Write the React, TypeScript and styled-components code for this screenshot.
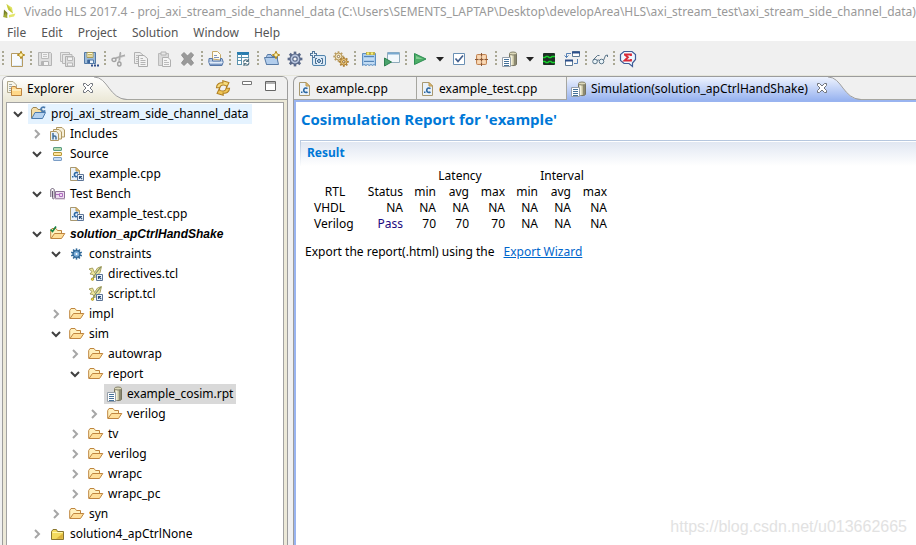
import React from "react";
import styled, { createGlobalStyle, css } from "styled-components";

const UI_FONT = '"Noto Sans", "Open Sans", sans-serif';

const GlobalStyle = createGlobalStyle`
  *, *::before, *::after { box-sizing: border-box; }
  body { margin: 0; background: #f0f0f0; }
  button { font: inherit; color: inherit; border: 0; background: none; padding: 0; }
`;

/* ---------- layout ---------- */

const Window = styled.div`
  position: relative;
  display: flex;
  flex-direction: column;
  height: 100vh;
  overflow: hidden;
  background: #f0f0f0;
  color: #000;
  font: 12px/20px ${UI_FONT};
`;

const TitleBar = styled.header`
  display: flex;
  align-items: center;
  gap: 6px;
  height: 24px;
  flex: none;
  padding: 0 0 1px 2px;
  background: #fff;
  color: #999;
  white-space: nowrap;
  overflow: hidden;
`;

const MenuBar = styled.nav`
  display: flex;
  align-items: center;
  gap: 15px;
  height: 17px;
  flex: none;
  padding-left: 7px;
  background: #fff;
  color: #555;
`;

const ToolBar = styled.div`
  display: flex;
  align-items: center;
  height: 35px;
  flex: none;
  padding: 2px 0 0 2px;
  border-bottom: 1px solid #e6e6dc;
`;

const ToolGroup = styled.div`
  display: flex;
  align-items: center;
  gap: 7px;
  padding: 0 5px;

  &::before {
    content: "";
    width: 2px;
    height: 16px;
    margin: 0 -2px 0 -5px;
    background: repeating-linear-gradient(#aaa894 0 2px, transparent 2px 4px);
  }
`;

const ToolButton = styled.button<{ $narrow?: boolean }>`
  display: flex;
  align-items: center;
  justify-content: center;
  width: ${(p) => (p.$narrow ? 9 : 16)}px;
  height: 16px;
`;

const Workbench = styled.main`
  display: flex;
  flex: 1;
  gap: 5px;
  min-height: 0;
  padding-left: 2px;
`;

const Explorer = styled.section`
  display: flex;
  flex-direction: column;
  width: 286px;
  flex: none;
  border: 1px solid #9c9c9c;
  border-bottom: 0;
  border-radius: 6px 6px 0 0;
  background: #ece9d8;
`;

const ExplorerHead = styled.div`
  display: flex;
  align-items: stretch;
  height: 23px;
  flex: none;
  border-bottom: 1px solid #a6a6a0;
  border-radius: 5px 5px 0 0;
  background: #f0f0f0;
`;

const ViewTab = styled.div`
  display: flex;
  align-items: center;
  gap: 4px;
  margin-bottom: -1px;
  padding-left: 4px;
  border-radius: 5px 0 0 0;
  background: linear-gradient(#fff, #ece9d8);
`;

const Curve = styled.svg`
  display: block;
  width: 34px;
  height: 23px;
  flex: none;
`;

const HeadTools = styled.div`
  display: flex;
  gap: 8px;
  margin-left: auto;
  padding: 3px 8px 0 0;
`;

const Tree = styled.ul`
  flex: 1;
  min-height: 0;
  margin: 2px 3px 0;
  padding: 1px 0 0;
  border: 1px solid #a2a2a2;
  border-bottom: 0;
  background: #fff;
  list-style: none;
  overflow: hidden;
`;

const TreeRow = styled.li<{ $level: number }>`
  display: flex;
  height: 20px;
  padding-left: ${(p) => 6 + p.$level * 19}px;
  white-space: nowrap;
`;

const Twisty = styled.button`
  display: flex;
  align-items: center;
  width: 15px;
  height: 20px;
`;

const NodeLabel = styled.span<{ $tone?: "hot" | "selected"; $active?: boolean }>`
  display: flex;
  align-items: center;
  gap: 4px;
  padding: 0 3px;
  ${(p) => p.$tone === "hot" && css`background: #e5f3ff;`}
  ${(p) => p.$tone === "selected" && css`background: #d9d9d9;`}
  ${(p) => p.$active && css`font: italic bold 12px/18px "Liberation Sans", Arial, sans-serif;`}
`;

const Editor = styled.section`
  display: flex;
  flex-direction: column;
  flex: 1;
  min-width: 0;
  border: 1px solid #9c9c9c;
  border-width: 1px 0 0 1px;
  border-radius: 6px 0 0 0;
`;

const EditorTabs = styled.div`
  display: flex;
  height: 25px;
  flex: none;
  border-bottom: 2px solid #99b4f0;
  box-shadow: inset 0 -1px #a6a6a0;
  overflow: hidden;
  white-space: nowrap;
`;

const EditorTab = styled.button<{ $width: number }>`
  display: flex;
  align-items: center;
  gap: 3px;
  width: ${(p) => p.$width}px;
  flex: none;
  padding-left: 3px;
  border-right: 1px solid #a6a6a0;
`;

const ActiveTab = styled.button`
  display: flex;
  align-items: center;
  gap: 4px;
  flex: none;
  padding-left: 4px;
  border-radius: 6px 0 0 0;
  background: linear-gradient(#eef3fe, #99b4f0);
`;

const CloseMark = styled.svg`
  width: 12px;
  height: 12px;
  margin: 0 0 1px 4px;
  flex: none;
`;

const Page = styled.div`
  flex: 1;
  padding: 7px 0 0 4px;
  border-left: 2px solid #99b4f0;
  background: #fff;
`;

const ReportTitle = styled.h1`
  margin: 0 0 10px 1px;
  color: #0078d7;
  font-family: "Open Sans", "Noto Sans", sans-serif;
  font-size: 15px;
  line-height: 21px;
`;

const SectionTitle = styled.h2`
  height: 26px;
  margin: 0;
  padding-left: 6px;
  border: 1px solid #b5c6de;
  border-width: 1px 0 0 1px;
  border-image: linear-gradient(#b5c6de, #fff) 1;
  background: linear-gradient(#fff 0 1px, #e1e7f2 1px, #fff);
  color: #0078d7;
  font-size: 12px;
  line-height: 23px;
`;

const ReportTable = styled.table`
  margin: 2px 0 0 14px;
  border-collapse: collapse;
  table-layout: fixed;
  width: 293px;
  line-height: 16px;

  th, td { padding: 0; font-weight: normal; text-align: right; white-space: nowrap; }
  th[scope="row"] { text-align: left; }
  th[scope="colgroup"], th.rtl { text-align: center; }
  th[scope="colgroup"] { padding-left: 12px; }
`;

const Col = styled.col<{ $width: number }>`
  width: ${(p) => p.$width}px;
`;

const Pass = styled.td`
  color: #1c0a80;
`;

const ExportLine = styled.p`
  margin: 10px 0 0 5px;

  a { margin-left: 6px; color: #0066cc; }
`;

const Watermark = styled.div`
  position: absolute;
  right: 9px;
  bottom: 8px;
  color: #e2e2e2;
  font: 16px/20px "Liberation Sans", Arial, sans-serif;
`;

/* ---------- icons ---------- */

const IconSvg = styled.svg`
  display: block;
  width: 16px;
  height: 16px;
  flex: none;
  overflow: visible;
`;

const Icon = ({ children }: { children: React.ReactNode }) => (
  <IconSvg viewBox="0 0 16 16" fill="none" aria-hidden="true">{children}</IconSvg>
);

const Spark = ({ x, y }: { x: number; y: number }) => (
  <path
    transform={`translate(${x} ${y})`}
    d="M0-3.8 1.1-1.1 3.8 0 1.1 1.1 0 3.8-1.1 1.1-3.8 0-1.1-1.1Z"
    fill="#fff2a8" stroke="#b48a1e" strokeWidth="1"
  />
);

const teeth = (n: number, r: number) =>
  Array.from({ length: n }, (_, i) => <path key={i} d={`M0 0V${-r}`} transform={`rotate(${(360 / n) * i})`} />);

const LogoIcon = () => (
  <Icon>
    <path d="M4.5 0 10 3.5 11 9.5 6 5.5Z" fill="#dfe362" />
    <path d="M4.5 0 6.5 6 11 9.5 8 4Z" fill="#c3c83c" />
    <path d="M2 5.5 5.5 9 5 13.5 1.5 12.5Z" fill="#77802a" />
    <path d="M1 13 4 8.5 5.5 14Z" fill="#a2ac34" />
    <path d="M7 11 13.5 9.5 12 12.5 7 13.5Z" fill="#e3e66c" />
  </Icon>
);
const NewIcon = () => (
  <Icon>
    <path d="M2.5 2.5H11L13.5 6V15.5H2.5Z" fill="#f7fafe" stroke="#b59b62" />
    <path d="M12.5 7V14.5H4" stroke="#dce8f5" />
    <Spark x={12} y={4} />
  </Icon>
);
const SaveIcon = () => (
  <Icon>
    <path d="M1.5 1.5H13.5L14.5 2.5V14.5H1.5Z" fill="#dedede" stroke="#b4b4b4" />
    <path d="M4.5 1.5H11.5V7.5H4.5Z" fill="#f2f2f2" stroke="#bababa" />
    <path d="M6 3.5H10M6 5.5H10" stroke="#c4c4c4" />
    <path d="M4.5 10.5H11.5V14.5H4.5Z" fill="#f4f4f4" stroke="#b4b4b4" />
    <path d="M6 11V14" stroke="#b4b4b4" strokeWidth="2" />
  </Icon>
);
const SaveAllIcon = () => (
  <Icon>
    <path d="M.5 1.5H9.5V10.5H.5Z" fill="#e6e6e6" stroke="#bcbcbc" />
    <path d="M2.5 3.5H12V12.5H2.5Z" fill="#e6e6e6" stroke="#b8b8b8" />
    <path d="M5.5 5.5H13.5L14.5 6.5V15.5H5.5Z" fill="#dedede" stroke="#b0b0b0" />
    <path d="M7.5 6H12.5V9.5H7.5ZM7.5 12H12.5V15H7.5Z" fill="#f4f4f4" stroke="#b8b8b8" />
  </Icon>
);
const SaveAsIcon = () => (
  <Icon>
    <path d="M1.5 1.5H12.5V12.5H1.5Z" fill="#9dbbd9" stroke="#5279a6" />
    <path d="M4 1.5H10V6.5H4Z" fill="#fffbe2" stroke="#a99c58" />
    <path d="M5 3.5H9M5 5H9" stroke="#c8b660" />
    <path d="M4.5 9H10.5V12.5H4.5Z" fill="#eef5fc" stroke="#5279a6" />
    <path d="M6 9V12" stroke="#3c669c" strokeWidth="2" />
    <path d="M8 14.5H10M11 14.5H13M14 14.5H16" stroke="#30508c" strokeWidth="2" />
  </Icon>
);
const CutIcon = () => (
  <Icon>
    <path d="M9.5 1.5 8 11M1.5 8 14 4.5" stroke="#c2c2c2" strokeWidth="2" />
    <path d="m9.5 1-1 8M5 7l9-3" stroke="#a8a8a8" />
    <ellipse cx="3" cy="8.8" rx="2" ry="1.7" fill="#eee" stroke="#a2a2a2" strokeWidth="1.4" />
    <ellipse cx="8.3" cy="13" rx="1.7" ry="2" fill="#eee" stroke="#a2a2a2" strokeWidth="1.4" />
  </Icon>
);
const CopyIcon = () => (
  <Icon>
    <path d="M.5 1.5H6L9.5 4.5V12.5H.5Z" fill="#ececec" stroke="#b2b2b2" />
    <path d="M2 4.5H5M2 6.5H5M2 8.5H5M2 10.5H5" stroke="#bdbdbd" />
    <path d="M4.5 4.5H10L13.5 7.5V15.5H4.5Z" fill="#f3f3f3" stroke="#ababab" />
    <path d="M6.5 7.5H9M6.5 9.5H11.5M6.5 11.5H11.5M6.5 13.5H11.5" stroke="#b3b3b3" />
  </Icon>
);
const PasteIcon = () => (
  <Icon>
    <path d="M1.5 2.5H11.5V14.5H1.5Z" fill="#dadada" stroke="#bababa" />
    <path d="M4 1H9V4H4Z" fill="#e7e7e7" stroke="#b2b2b2" />
    <path d="M5.5 6.5H11L13.5 9V15.5H5.5Z" fill="#f5f5f5" stroke="#b0b0b0" />
    <path d="M7 9.5H10M7 11.5H12M7 13.5H12" stroke="#bcbcbc" />
  </Icon>
);
const DeleteIcon = () => (
  <Icon>
    <path d="M1.5 4 4 1.5 7.5 5 11 1.5 13.5 4 10.5 8 13.5 12 11 14.5 7.5 11 4 14.5 1.5 12 4.5 8Z" fill="#9a9a9a" stroke="#8e8e8e" />
  </Icon>
);
const PrintIcon = () => (
  <Icon>
    <path d="M4.5 8V.5H9.5L12.5 3.5V9Z" fill="#fffdf3" stroke="#c4a868" />
    <path d="M6 4.5H9M6 6.5H11" stroke="#8094bc" />
    <path d="M1 7.5H4.5V10H12.5V7.5H14L15.2 11 14 14.5H2L.8 11Z" fill="#b4c8e4" stroke="#5577a8" />
    <path d="M1.5 11.5H14.5" stroke="#e2ecf8" />
    <path d="M2 13.5H14" stroke="#7c98c2" />
  </Icon>
);
const TableIcon = () => (
  <Icon>
    <path d="M1.5 1.5H12.5V13.5H1.5Z" fill="#fff" />
    <path d="M1 2.5H13" stroke="#2a7db0" strokeWidth="3" />
    <path d="M1.5 3V13.5M5.5 3V13.5M1 6.5H13M1 9.5H6M1 13.5H6M12.5 3V7" stroke="#5b93ae" />
    <path d="M7.5 11.5C7.5 8.5 11 8 12 10M13 11.5C13 14.5 9.5 15 8 13M12.5 7.5V10.5H10M8 15V12.5H10.5" stroke="#587888" strokeWidth="1.2" />
  </Icon>
);
const NewProjectIcon = () => (
  <Icon>
    <path d="M2.5 13.5V5.5L3.5 3.5H7L8 5.5H13.5V13.5Z" fill="#a9c5e8" stroke="#587ba6" />
    <path d="M.5 6.5H13L14.5 13.5H2.5Z" fill="#b2cdec" stroke="#587ba6" />
    <Spark x={12} y={4} />
  </Icon>
);
const GearIcon = () => (
  <Icon>
    <g transform="translate(8 8)" stroke="#5b6a8a" strokeWidth="2.6">{teeth(8, 7.4)}</g>
    <circle cx="8" cy="8" r="5" fill="#b9c6df" stroke="#5b6a8a" strokeWidth="1.2" />
    <circle cx="8" cy="8" r="2.2" fill="#f2f4f8" stroke="#5b6a8a" strokeWidth="1.2" />
  </Icon>
);
const AddModuleIcon = () => (
  <Icon>
    <rect x="2.5" y="4.5" width="13" height="10" rx="1.5" fill="#dbe9f6" stroke="#5184ad" />
    <path d="M3.5 0V7M0 3.5H7" stroke="#53779b" strokeWidth="3" />
    <path d="M3.5 1V6M1 3.5H6" stroke="#e4f0f9" />
    <path d="M7 7.5H5.5V12.5H7M11 7.5H12.5V12.5H11" stroke="#476d90" />
    <path d="m9 8 2 2-2 2-2-2Z" fill="#8fb0cf" stroke="#476d90" />
  </Icon>
);
const GearsIcon = () => (
  <Icon>
    <g transform="translate(5.5 5.5)" stroke="#b89a5e" strokeWidth="1.8">{teeth(8, 5.2)}</g>
    <circle cx="5.5" cy="5.5" r="3.4" fill="#f4e6be" stroke="#b89a5e" />
    <circle cx="5.5" cy="5.5" r="1.2" fill="#fff" stroke="#8d744a" />
    <g transform="translate(10.8 10.8)" stroke="#ae8136" strokeWidth="1.8">{teeth(8, 5)}</g>
    <circle cx="10.8" cy="10.8" r="3.3" fill="#edc97d" stroke="#ae8136" />
    <circle cx="10.8" cy="10.8" r="1.2" fill="#fff" stroke="#8b6528" />
  </Icon>
);
const NotepadIcon = () => (
  <Icon>
    <path d="M1.5 2.5H14.5V14.5L13 13.5 11.5 14.5 10 13.5 8.3 14.5 6.5 13.5 5 14.5 3 13.5 1.5 14.5Z" fill="#a8cbed" stroke="#5e8fc0" />
    <path d="M3 5.5H13M3 10.5H13" stroke="#5484b6" />
    <path d="M3 8H13M3 12H13" stroke="#ddecf9" />
    <path d="M5 2.5H14" stroke="#bdb04c" strokeWidth="3" />
    <path d="M6 2.5H8M10 2.5H12" stroke="#f8ef78" strokeWidth="2" />
  </Icon>
);
const RunWindowIcon = () => (
  <Icon>
    <path d="M3.5 1.5H15.5V11.5H3.5Z" fill="#f2f8fc" stroke="#8fabbb" />
    <path d="M4 2.5H15" stroke="#78a9d0" strokeWidth="2" />
    <path d="M.5 7 7.5 11 .5 15Z" fill="#4aa36b" stroke="#2f7f50" />
  </Icon>
);
const PlayIcon = () => (
  <Icon>
    <path d="M2.5 2.5 14 8 2.5 13.5Z" fill="#4daf68" stroke="#2f8e53" />
    <path d="m4 5 7 3H4Z" fill="#85cc94" />
  </Icon>
);
const CaretIcon = () => (
  <svg width="8" height="5" viewBox="0 0 8 5"><path d="M0 0H8L4 4.5Z" fill="#222" /></svg>
);
const CheckIcon = () => (
  <Icon>
    <path d="M2.5 2.5H13.5V13.5H2.5Z" fill="#fff" stroke="#6a90b4" />
    <path d="m4.5 7.5 2.5 3 5-6" stroke="#43608e" strokeWidth="1.7" />
  </Icon>
);
const CrosshairIcon = () => (
  <Icon>
    <rect x="2.5" y="3.5" width="10" height="10" rx="1" fill="#f3c79a" stroke="#bf8354" />
    <path d="M7.5 2V15M1 8.5H14" stroke="#8a5836" />
    <path d="M5 4V13M10 4V13M3 6H12M3 11H12" stroke="#fbe3c8" strokeWidth=".8" />
  </Icon>
);
const ReportIcon = () => (
  <Icon>
    <path d="M7.5 3V13.5C9 15 13 15 14.5 13.5V3Z" fill="#c6c2a0" />
    <path d="M9.5 3V14" stroke="#f4f1db" strokeWidth="2" />
    <path d="M13 3V14" stroke="#8d8a72" strokeWidth="2" />
    <path d="M7.5 3V7M14.5 3V13.5C13.5 15 11 14.5 9.5 14.5" stroke="#75735f" />
    <ellipse cx="11" cy="2.5" rx="3.5" ry="1.5" fill="#dedabb" stroke="#85826a" />
    <path d="M.5 6.5H8.5V15.5H.5Z" fill="#fff" stroke="#97a0aa" />
    <path d="M2 8.5H7M2 10.5H7M2 12.5H7M2 14.5H7" stroke="#44719a" />
  </Icon>
);
const WaveIcon = () => (
  <Icon>
    <rect x="2" y="2" width="12" height="12" rx="1" fill="#1f2e26" />
    <path d="M2 6.5H4L5 5.5H7L8 6.5H10L11 5.5H14M2 10.5H4L5 11.5H7L8 10.5H10L11 11.5H14" stroke="#16d42c" strokeWidth="1.3" />
  </Icon>
);
const CompareIcon = () => (
  <Icon>
    <path d="M8.5.5H15.5V5.5H8.5ZM1.5 9.5H8.5V14.5H1.5Z" fill="#fff" stroke="#5f7a94" />
    <path d="M8 1.5H16M1 9.5H9" stroke="#2c4f8a" strokeWidth="2" />
    <path d="M7 2.5H2.5V7M.5 4.5 2.5 6.5 4.5 4.5M10 12.5H13.5V8" stroke="#5580b5" />
  </Icon>
);
const GlassesIcon = () => (
  <Icon>
    <circle cx="3" cy="10.5" r="2.3" fill="#e9f3f8" stroke="#5a7488" />
    <circle cx="9.5" cy="10.5" r="2.3" fill="#e9f3f8" stroke="#5a7488" />
    <path d="m5 9.5 1.2-.6L7.5 9.5M1 9l4.5-4.5h2M11.5 9.5 13.5 4.5l2-.5V6" stroke="#5a7488" />
  </Icon>
);
const FeedbackIcon = () => (
  <Icon>
    <path d="M4 .5H12L15.5 3.5V8.5L12.5 12V15.5L9 12.5H4L.5 9.5V3.5Z" fill="#eef7ff" stroke="#3f5c97" strokeWidth="1.2" />
    <path d="M4 3.5H11V5M4.5 3.5 8 6.2 4.5 9.5H11V8" stroke="#d92b38" strokeWidth="1.8" />
  </Icon>
);
const ExplorerIcon = () => (
  <Icon>
    <path d="M.5.5H6L9.5 4V11.5H.5Z" fill="#f8f6ea" stroke="#b0a88c" />
    <path d="M2 3.5H5M2 5.5H7M2 7.5H5M2 9.5H5" stroke="#a2acad" />
    <path d="M4.5 14.5V6.5L5.5 5.5H8.5L9.5 7.5H14.5V14.5Z" fill="#ffd88a" stroke="#bd843f" />
    <path d="M5 9H14" stroke="#fff0c3" strokeWidth="1.5" />
  </Icon>
);
const RefreshIcon = () => (
  <Icon>
    <path d="M1.5 7C2 3.5 5 2 8.5 3V.8L14.5 3.2 11.5 8.2V6C8 4.2 5.5 4.8 5 7.5Z" transform="rotate(-6 8 8)" fill="#f8dd7c" stroke="#b07f22" />
    <path d="M14.5 9C14 12.5 11 14 7.5 13V15.2L1.5 12.8 4.5 7.8V10C8 11.8 10.5 11.2 11 8.5Z" transform="rotate(-6 8 8)" fill="#f0c555" stroke="#b07f22" />
  </Icon>
);
const MinimizeIcon = () => <Icon><path d="M3.5 1.5H12.5V4.5H3.5Z" fill="#fff" stroke="#777" /></Icon>;
const MaximizeIcon = () => (
  <Icon>
    <path d="M2.5 1.5H12.5V10.5H2.5Z" fill="#fff" stroke="#666" />
    <path d="M2.5 3H12.5" stroke="#666" />
  </Icon>
);
const ProjectIcon = () => (
  <Icon>
    <path d="M.5 12V3.5L2 1.5H5.5L7 3.5H11V11Z" fill="#f5dfa8" stroke="#9c8452" />
    <path d="M.7 12.5 4 6.5H14.5L11.5 12.5Z" fill="#b4d2f0" stroke="#4b7bae" />
    <path d="M14.2 1.6C11.5.4 9.8 1.8 10 3.4 10.2 5 12 5.8 14.4 4.8" stroke="#4b7bae" strokeWidth="1.7" />
  </Icon>
);
const IncludesIcon = () => (
  <Icon>
    <path d="M6.5 1.5H12L14.5 4V11H6.5Z" fill="#f6efd8" stroke="#b09862" />
    <path d="M3.5 3.5H9L11.5 6V13H3.5Z" fill="#f6efd8" stroke="#b09862" />
    <path d="M.5 5.5H6.5L8.5 8V14.5H.5Z" fill="#e7f0f8" stroke="#b09862" />
    <path d="M3 7V13.5M3 11C4 9.5 6 9.5 6 11.5V13.5" stroke="#44709a" strokeWidth="1.5" />
  </Icon>
);
const SourceIcon = () => (
  <Icon>
    <rect x="3.5" y="1.5" width="8" height="3" rx=".5" fill="#b8dcac" stroke="#5a9c84" />
    <rect x="3.5" y="6.5" width="8" height="3" rx=".5" fill="#ffe59d" stroke="#b9983a" />
    <rect x="3.5" y="11.5" width="8" height="3" rx=".5" fill="#c8ddf3" stroke="#7a9dc6" />
  </Icon>
);
const CFileIcon = () => (
  <Icon>
    <path d="M2.5 1.5H9L12.5 5V14.5H2.5Z" fill="#eaf2fa" stroke="#a89870" />
    <path d="M9 1.5V5H12.5Z" fill="#e9c580" stroke="#b9974f" />
    <path d="M10.5 7.7C8.5 6.2 6.6 7.5 6.7 9.4 6.8 11.5 9 12 10.5 10.8" stroke="#2b67a2" strokeWidth="1.6" />
    <path d="M4 10.5H5.5V12H4Z" fill="#2b67a2" />
  </Icon>
);
const LinkBadge = () => (
  <>
    <path d="M8.5 8.5H14.5V14.5H8.5Z" fill="#edf4fa" stroke="#5d7598" />
    <path d="M10.5 13V10.5H13M10.5 10.5 13.2 13.2" stroke="#2f4f7b" strokeWidth="1.1" />
  </>
);
const LinkedCFileIcon = () => (
  <Icon>
    <path d="M1.5 1.5H7L10.5 5V14.5H1.5Z" fill="#eaf2fa" stroke="#a89870" />
    <path d="M7 1.5V5H10.5Z" fill="#e9c580" stroke="#b9974f" />
    <path d="M9 7.2C7 5.7 5.3 7 5.4 8.8 5.5 10.5 7 11 8 10.4" stroke="#2b67a2" strokeWidth="1.6" />
    <path d="M3 10H4.5V11.5H3Z" fill="#2b67a2" />
    <LinkBadge />
  </Icon>
);
const BenchIcon = () => (
  <Icon>
    <path d="M5.5 5.5H14.5V12.5H5.5Z" fill="#ecdcf0" stroke="#8d7097" />
    <path d="M6 8.5H9M9.5 7.5H12.5V10.5H9.5Z" stroke="#b06cc0" />
    <path d="M.8 11V4C.8 2 4.2 2 4.2 4V11.5C4.2 13.5 2.5 13.5 2.5 11.5V5" stroke="#6a5a74" />
    <path d="M5 13H15" stroke="#c6b6c8" />
  </Icon>
);
const OpenFolder = () => (
  <>
    <path d="M.7 12.5V4.5L2 2.5H6L7.5 4.5H11.5V7.5" fill="#fff0bd" stroke="#bf853f" />
    <path d="M1 12.5 4.5 7.5H14.8L11.5 12.5Z" fill="#ffdf9a" stroke="#bf853f" strokeLinejoin="round" />
  </>
);
const FolderIcon = () => <Icon><OpenFolder /></Icon>;
const SolutionIcon = () => (
  <Icon>
    <OpenFolder />
    <path d="m.5 3.5 2 2L6 .5" stroke="#188346" strokeWidth="1.7" />
  </Icon>
);
const ClosedFolderIcon = () => (
  <Icon>
    <path d="M1.5 13.5V5.5L3 3.5H6.5L7.5 5.5H13.5V13.5Z" fill="#f3db5e" stroke="#8a7730" />
    <path d="M2.5 6.5H12.5" stroke="#fff6aa" />
    <path d="M12.8 7.5V12.8H6Z" fill="#dbb03c" />
  </Icon>
);
const CogIcon = () => (
  <Icon>
    <g transform="translate(7.5 8)" stroke="#2f6898" strokeWidth="1.6">{teeth(10, 5.6)}</g>
    <circle cx="7.5" cy="8" r="3.4" fill="#7fb0da" stroke="#2f6898" strokeWidth="1.3" />
    <circle cx="7.5" cy="8" r="1" fill="#fff" />
  </Icon>
);
const TclIcon = () => (
  <Icon>
    <path d="M1 3 4.5 2 6.5 6.5 9.5 2 13.5.5 12 6.5 8 10.5 6.5 12 5 8.5 2 8 4 5.5Z" fill="#eee69e" stroke="#a09858" strokeWidth=".9" />
    <path d="M12.8 1.2 8 7 4.5 13" stroke="#7f8e64" strokeWidth="1.1" />
    <circle cx="4.5" cy="13.2" r="1.2" fill="#f3df42" stroke="#a48c23" strokeWidth=".8" />
    <LinkBadge />
  </Icon>
);

const CloseIcon = () => (
  <CloseMark viewBox="0 0 12 12">
    <path d="M1.5 1.5H3.5L6 4 8.5 1.5H10.5V3.5L8 6 10.5 8.5V10.5H8.5L6 8 3.5 10.5H1.5V8.5L4 6 1.5 3.5Z" fill="#fff" stroke="#70747c" />
  </CloseMark>
);

const TwistyMark = ({ open }: { open: boolean }) => (
  <svg width="10" height="10" viewBox="0 0 10 10" fill="none">
    {open
      ? <path d="m1 3 4 4 4-4" stroke="#404040" strokeWidth="2" />
      : <path d="m3 1 4 4-4 4" stroke="#a6a6a6" strokeWidth="2" />}
  </svg>
);

/* ---------- data ---------- */

type Tool = { label: string; icon: React.ComponentType; narrow?: boolean };
const tool = (label: string, icon: React.ComponentType, narrow = false): Tool => ({ label, icon, narrow });

const toolGroups: Tool[][] = [
  [tool("New", NewIcon)],
  [tool("Save", SaveIcon), tool("Save All", SaveAllIcon), tool("Save As", SaveAsIcon)],
  [tool("Cut", CutIcon), tool("Copy", CopyIcon), tool("Paste", PasteIcon), tool("Delete", DeleteIcon)],
  [tool("Print", PrintIcon)],
  [tool("Refresh table", TableIcon)],
  [tool("New Project", NewProjectIcon), tool("Settings", GearIcon), tool("New Solution", AddModuleIcon), tool("Solution Settings", GearsIcon)],
  [tool("Notes", NotepadIcon), tool("Run in window", RunWindowIcon)],
  [tool("Run", PlayIcon), tool("Run options", CaretIcon, true), tool("Check", CheckIcon), tool("Export RTL", CrosshairIcon)],
  [tool("Open Report", ReportIcon), tool("Report options", CaretIcon, true), tool("Wave Viewer", WaveIcon), tool("Compare Reports", CompareIcon)],
  [tool("View", GlassesIcon)],
  [tool("Feedback", FeedbackIcon)],
];

type Node = {
  text: string;
  level: number;
  icon: React.ComponentType;
  open?: boolean;
  tone?: "hot" | "selected";
  active?: boolean;
};

const nodes: Node[] = [
  { text: "proj_axi_stream_side_channel_data", level: 0, icon: ProjectIcon, open: true, tone: "hot" },
  { text: "Includes", level: 1, icon: IncludesIcon, open: false },
  { text: "Source", level: 1, icon: SourceIcon, open: true },
  { text: "example.cpp", level: 2, icon: LinkedCFileIcon },
  { text: "Test Bench", level: 1, icon: BenchIcon, open: true },
  { text: "example_test.cpp", level: 2, icon: LinkedCFileIcon },
  { text: "solution_apCtrlHandShake", level: 1, icon: SolutionIcon, open: true, active: true },
  { text: "constraints", level: 2, icon: CogIcon, open: true },
  { text: "directives.tcl", level: 3, icon: TclIcon },
  { text: "script.tcl", level: 3, icon: TclIcon },
  { text: "impl", level: 2, icon: FolderIcon, open: false },
  { text: "sim", level: 2, icon: FolderIcon, open: true },
  { text: "autowrap", level: 3, icon: FolderIcon, open: false },
  { text: "report", level: 3, icon: FolderIcon, open: true },
  { text: "example_cosim.rpt", level: 4, icon: ReportIcon, tone: "selected" },
  { text: "verilog", level: 4, icon: FolderIcon, open: false },
  { text: "tv", level: 3, icon: FolderIcon, open: false },
  { text: "verilog", level: 3, icon: FolderIcon, open: false },
  { text: "wrapc", level: 3, icon: FolderIcon, open: false },
  { text: "wrapc_pc", level: 3, icon: FolderIcon, open: false },
  { text: "syn", level: 2, icon: FolderIcon, open: false },
  { text: "solution4_apCtrlNone", level: 1, icon: ClosedFolderIcon, open: false },
];

/* ---------- page ---------- */

export default function App() {
  return (
    <Window>
      <GlobalStyle />
      <TitleBar>
        <LogoIcon />
        <span>
          Vivado HLS 2017.4 - proj_axi_stream_side_channel_data
          (C:\Users\SEMENTS_LAPTAP\Desktop\developArea\HLS\axi_stream_test\axi_stream_side_channel_data)
        </span>
      </TitleBar>
      <MenuBar>
        {["File", "Edit", "Project", "Solution", "Window", "Help"].map((m) => <button key={m}>{m}</button>)}
      </MenuBar>
      <ToolBar role="toolbar">
        {toolGroups.map((group, i) => (
          <ToolGroup key={i}>
            {group.map(({ label, icon: Glyph, narrow }) => (
              <ToolButton key={label} aria-label={label} $narrow={narrow}><Glyph /></ToolButton>
            ))}
          </ToolGroup>
        ))}
      </ToolBar>

      <Workbench>
        <Explorer>
          <ExplorerHead>
            <ViewTab>
              <ExplorerIcon />
              Explorer
              <CloseIcon />
            </ViewTab>
            <Curve viewBox="0 0 34 23">
              <defs>
                <linearGradient id="viewFill" x2="0" y2="1">
                  <stop stopColor="#fff" /><stop offset="1" stopColor="#ece9d8" />
                </linearGradient>
              </defs>
              <path d="M0 0C14 0 15 22 33 23H0Z" fill="url(#viewFill)" />
              <path d="M0 0C14 0 15 22 33 22.5" fill="none" stroke="#a0a0a0" />
            </Curve>
            <HeadTools>
              <ToolButton aria-label="Refresh"><RefreshIcon /></ToolButton>
              <ToolButton aria-label="Minimize"><MinimizeIcon /></ToolButton>
              <ToolButton aria-label="Maximize"><MaximizeIcon /></ToolButton>
            </HeadTools>
          </ExplorerHead>
          <Tree>
            {nodes.map(({ text, level, icon: Glyph, open, tone, active }, i) => (
              <TreeRow key={i} $level={level}>
                <Twisty as={open === undefined ? "span" : "button"} aria-label={open === undefined ? undefined : `Toggle ${text}`}>
                  {open !== undefined && <TwistyMark open={open} />}
                </Twisty>
                <NodeLabel $tone={tone} $active={active}><Glyph />{text}</NodeLabel>
              </TreeRow>
            ))}
          </Tree>
        </Explorer>

        <Editor>
          <EditorTabs role="tablist">
            <EditorTab role="tab" $width={123}><CFileIcon />example.cpp</EditorTab>
            <EditorTab role="tab" $width={150}><CFileIcon />example_test.cpp</EditorTab>
            <ActiveTab role="tab" aria-selected="true">
              <ReportIcon />
              Simulation(solution_apCtrlHandShake)
              <CloseIcon />
            </ActiveTab>
            <Curve viewBox="0 0 34 23">
              <defs>
                <linearGradient id="editorFill" x2="0" y2="1">
                  <stop stopColor="#eef3fe" /><stop offset="1" stopColor="#99b4f0" />
                </linearGradient>
              </defs>
              <path d="M0 0C14 0 15 22 33 23H0Z" fill="url(#editorFill)" />
              <path d="M0 0C14 0 15 22 33 22.5" fill="none" stroke="#a0a0a0" />
            </Curve>
          </EditorTabs>
          <Page>
            <ReportTitle>Cosimulation Report for 'example'</ReportTitle>
            <SectionTitle>Result</SectionTitle>
            <ReportTable>
              <colgroup>
                {[42, 47, 33, 33, 36, 33, 33, 36].map((w, i) => <Col key={i} $width={w} />)}
              </colgroup>
              <thead>
                <tr>
                  <td /><td />
                  <th scope="colgroup" colSpan={3}>Latency</th>
                  <th scope="colgroup" colSpan={3}>Interval</th>
                </tr>
                <tr>
                  <th className="rtl">RTL</th><th>Status</th>
                  <th>min</th><th>avg</th><th>max</th>
                  <th>min</th><th>avg</th><th>max</th>
                </tr>
              </thead>
              <tbody>
                <tr>
                  <th scope="row">VHDL</th><td>NA</td>
                  <td>NA</td><td>NA</td><td>NA</td>
                  <td>NA</td><td>NA</td><td>NA</td>
                </tr>
                <tr>
                  <th scope="row">Verilog</th><Pass>Pass</Pass>
                  <td>70</td><td>70</td><td>70</td>
                  <td>NA</td><td>NA</td><td>NA</td>
                </tr>
              </tbody>
            </ReportTable>
            <ExportLine>
              Export the report(.html) using the <a href="#export">Export Wizard</a>
            </ExportLine>
          </Page>
        </Editor>
      </Workbench>
      <Watermark>https://blog.csdn.net/u013662665</Watermark>
    </Window>
  );
}
